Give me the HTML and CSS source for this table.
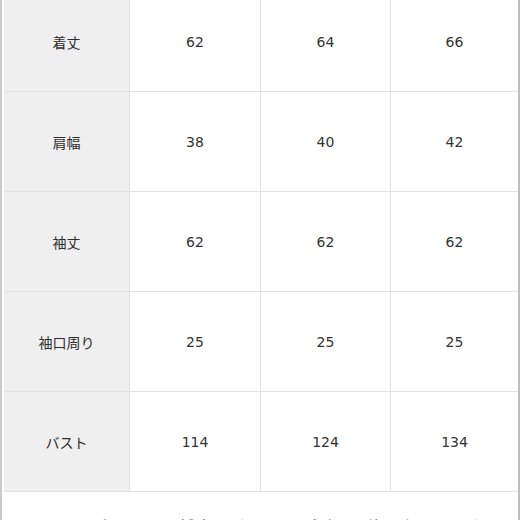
FILE: index.html
```html
<!DOCTYPE html>
<html lang="ja">
<head>
<meta charset="utf-8">
<link rel="stylesheet" href="styles.css">
</head>
<body>
<div class="frame">
  <div class="grid">
    <div class="cell head">着丈</div><div class="cell">62</div><div class="cell">64</div><div class="cell last">66</div>
    <div class="cell head">肩幅</div><div class="cell">38</div><div class="cell">40</div><div class="cell last">42</div>
    <div class="cell head">袖丈</div><div class="cell">62</div><div class="cell">62</div><div class="cell last">62</div>
    <div class="cell head">袖口周り</div><div class="cell">25</div><div class="cell">25</div><div class="cell last">25</div>
    <div class="cell head">バスト</div><div class="cell">114</div><div class="cell">124</div><div class="cell last">134</div>
  </div>
  <div class="note">※サイズは平置きで採寸しております。多少の誤差はご了承ください。</div>
</div>
</body>
</html>
```
FILE: styles.css
```css
html, body {
  margin: 0;
  padding: 0;
  background: #ffffff;
  overflow: hidden;
  height: 520px;
}
.frame {
  width: 514px;
  border-left: 2px solid #c9c9c9;
  border-right: 2px solid #bdbdbd;
  padding-left: 2px;
  margin-top: -8px;
  font-family: "DejaVu Sans", "Noto Sans CJK JP", sans-serif;
  font-size: 14px;
  color: #333333;
}
.grid {
  display: grid;
  grid-template-columns: 126px 131px 130px 127px;
}
.cell {
  height: 99px;
  display: flex;
  align-items: center;
  justify-content: center;
  border-bottom: 1px solid #e2e2e2;
  border-right: 1px solid #e2e2e2;
}
.cell.last {
  border-right: none;
}
.head {
  background: #efefef;
  font-family: "Noto Sans CJK JP", sans-serif;
  font-size: 14px;
  color: #2e2e2e;
}
.note {
  padding: 23px 0 20px 46px;
  font-family: "Noto Sans CJK JP", sans-serif;
  font-size: 14px;
  line-height: 20px;
  letter-spacing: 0.5px;
  color: #555555;
  white-space: nowrap;
  overflow: hidden;
}
```
